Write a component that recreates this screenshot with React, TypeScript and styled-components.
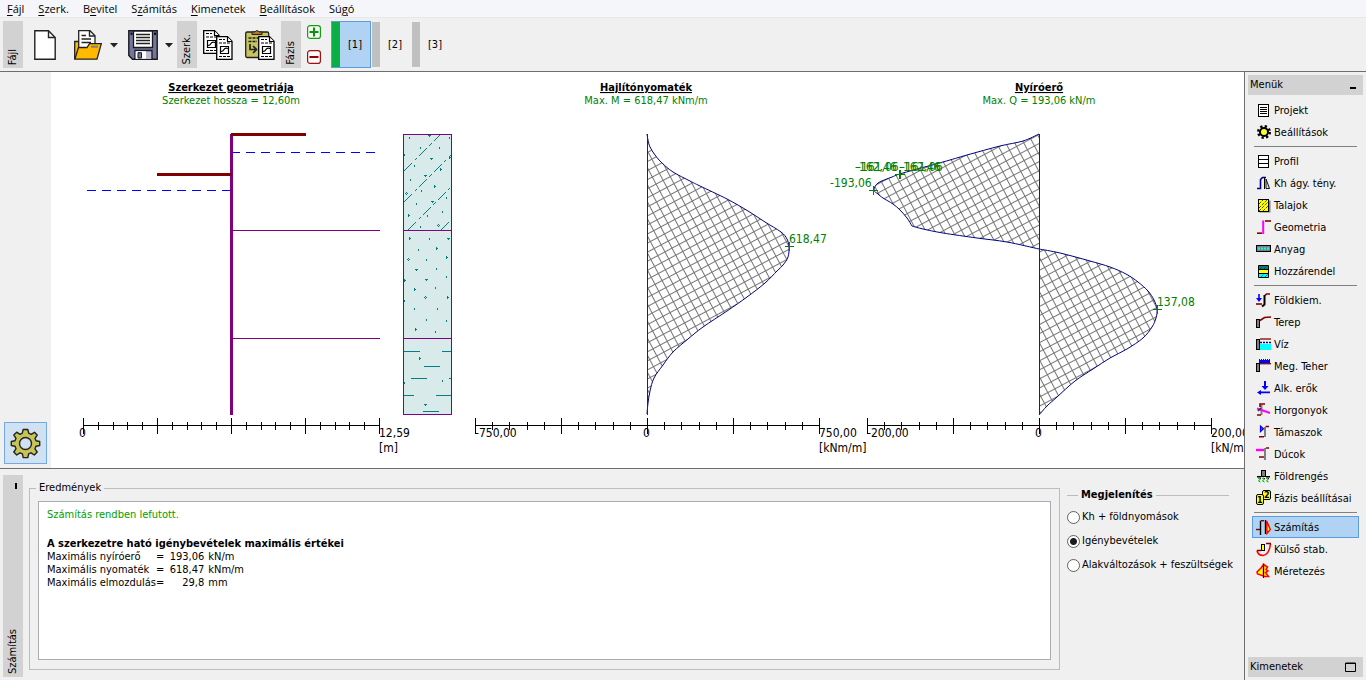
import React, { useState } from 'react';
import styled, { createGlobalStyle, css } from 'styled-components';

const ui = '"DejaVu Sans Condensed", "DejaVu Sans", sans-serif';

const GlobalStyle = createGlobalStyle`
  * { box-sizing: border-box; }
  body { margin: 0; background: #f0f0f0; color: #000; font: 11px/14px ${ui}; }
  button { font: inherit; color: inherit; background: none; border: 0; padding: 0; margin: 0; }
`;

const Page = styled.div`
  display: flex;
  flex-direction: column;
  min-height: 100vh;
  border-bottom: 1px solid #d4d4d4;
`;

const MenuBar = styled.nav`
  display: flex;
  gap: 14px;
  height: 18px;
  padding: 0 7px;
  background: #f5f6f9;
  border-bottom: 1px solid #e8e8e8;
  font-family: 'Open Sans', 'Noto Sans', sans-serif;
  line-height: 17px;
`;

const MenuLink = styled.button`
  display: block;
  white-space: nowrap;
  span { text-decoration: underline; text-underline-offset: 2px; }
`;

const Toolbar = styled.div`
  display: flex;
  height: 54px;
  padding: 3px;
  border-bottom: 1px solid #6e6e6e;
`;

const Tab = styled.div<{ $tall?: boolean }>`
  display: flex;
  flex: none;
  flex-direction: column;
  justify-content: ${(p) => (p.$tall ? 'space-between' : 'flex-end')};
  align-items: center;
  width: 20px;
  padding: ${(p) => (p.$tall ? '8px 0 3px' : '0 0 3px')};
  background: #d2d2d2;
`;

const VerticalText = styled.span`
  writing-mode: vertical-rl;
  transform: rotate(180deg);
  line-height: 16px;
`;

const PinMark = styled.button`
  width: 2px;
  height: 6px;
  margin-left: 6px;
  background: #000;
`;

const ToolButton = styled.button`
  display: flex;
  align-items: center;
  justify-content: center;
  width: 42px;
  height: 48px;
`;

const NewButton = styled(ToolButton)`width: 44px;`;

const DropButton = styled.button`
  display: flex;
  align-items: center;
  justify-content: center;
  width: 10px;
  height: 48px;
  margin-right: 3px;
`;

const PhaseTools = styled.div`
  display: flex;
  flex-direction: column;
  align-items: center;
  gap: 11px;
  width: 26px;
  padding-top: 4px;
  margin-right: 4px;
  button { height: 14px; }
  svg { display: block; }
`;

const PhaseButton = styled.button<{ $on: boolean }>`
  width: 40px;
  height: 47px;
  padding: 1px 0 0 8px;
  border: 1px solid ${(p) => (p.$on ? '#5b9bdf' : 'transparent')};
  background: linear-gradient(90deg, ${(p) => (p.$on ? '#08b043' : '#c0c0c0')} 8px, ${(p) => (p.$on ? '#b1d3f3' : 'transparent')} 8px) padding-box;
`;

const Body = styled.div`
  display: flex;
  flex: 1;
`;

const Main = styled.main`
  display: flex;
  flex: 1;
  flex-direction: column;
  min-width: 0;
`;

const Workspace = styled.section`
  display: flex;
  flex: 1;
  min-height: 397px;
  border-bottom: 1px solid #6e6e6e;
`;

const ViewTools = styled.div`
  display: flex;
  flex: none;
  flex-direction: column;
  justify-content: flex-end;
  width: 51px;
  padding: 4px;
`;

const GearButton = styled.button`
  display: flex;
  align-items: center;
  justify-content: center;
  height: 42px;
  border: 1px solid #72a9e6;
  background: #d0e1f2;
`;

const Plot = styled.svg`
  flex: 1;
  min-width: 0;
  background: #fff;
  font-family: ${ui};
`;

const ResultPanel = styled.section`
  display: flex;
  padding: 6px 15px 3px 3px;
`;

const ResultGroup = styled.fieldset`
  display: flex;
  flex: 1;
  min-width: 0;
  margin: 6px 7px 7px 6px;
  padding: 6px 8px 9px;
  border: 1px solid #bcbcbc;
  legend { height: 14px; padding: 0 3px; margin-left: -2px; }
`;

const ResultBox = styled.div`
  flex: 1;
  min-height: 159px;
  padding: 6px 8px;
  background: #fff;
  border: 1px solid #a9acb2;
`;

const StatusLine = styled.p`
  margin: 0 0 15px;
  color: #00a000;
`;

const ResultHeading = styled.h2`
  margin: 0;
  font-size: 11px;
  line-height: 13px;
`;

const ResultTable = styled.table`
  border-collapse: collapse;
  line-height: 13px;
  white-space: nowrap;
  th { padding: 0; text-align: left; font-weight: normal; min-width: 106px; }
  td { padding: 0; }
  td:nth-of-type(2) { min-width: 40px; text-align: right; }
  td:nth-of-type(3) { padding-left: 4px; }
`;

const DisplayGroup = styled.fieldset`
  flex: none;
  width: 162px;
  min-width: 0;
  margin: 13px 0 0;
  padding: 3px 0 0;
  border: 0;
  border-top: 1px solid #bcbcbc;
  legend { height: 14px; padding: 0 3px; margin-left: 11px; font-weight: bold; }
`;

const RadioRow = styled.label`
  display: flex;
  align-items: center;
  gap: 2px;
  height: 24px;
  white-space: nowrap;
  input {
    appearance: none;
    flex: none;
    width: 13px;
    height: 13px;
    margin: 0;
    border: 1px solid #606060;
    border-radius: 50%;
    background: #fff;
  }
  input:checked { background: radial-gradient(circle, #1c1c1c 3px, #fff 4px); }
`;

const Sidebar = styled.aside`
  display: flex;
  flex: none;
  flex-direction: column;
  width: 122px;
  padding: 3px;
  border-left: 1px solid #6e6e6e;
`;

const SideHead = styled.button`
  display: flex;
  justify-content: space-between;
  align-items: center;
  height: 20px;
  padding: 0 7px 0 2px;
  background: #d2d2d2;
`;

const SideList = styled.ul`
  flex: 1;
  margin: 4px 4px 0;
  padding: 0;
  list-style: none;
`;

const SideItem = styled.button<{ $on: boolean }>`
  display: flex;
  align-items: center;
  gap: 2px;
  width: 107px;
  height: 22px;
  padding-left: 3px;
  border: 1px solid transparent;
  white-space: nowrap;
  svg { flex: none; }
  span { padding-top: 2px; }
  ${(p) => p.$on && css`background: #b1d3f3; border-color: #5b9bdf;`}
`;

const Divider = styled.li`
  height: 7px;
  padding: 3px 2px;
  &::before { content: ''; display: block; height: 1px; background: #808080; }
`;

/* Toolbar drawings */

const NewIcon = () => (
  <svg width="22" height="30" viewBox="0 0 22 30">
    <path d="M1 .8H14.500L21.200 7.500V29.200H.8V.8Z" fill="#fff" stroke="#222" strokeWidth="1.400" />
    <path d="M14.500 1V7.500H21" fill="none" stroke="#222" strokeWidth="1.400" />
  </svg>
);

const OpenIcon = () => (
  <svg width="28" height="30" viewBox="0 0 28 30">
    <path d="M.7 29V11.500H9L11 14H22V17" fill="#ffb900" stroke="#222" strokeWidth="1.300" />
    <path d="M4.700 18V.7H16L21 5.700V18Z" fill="#fff" stroke="#222" strokeWidth="1.300" />
    <path d="M15.500 1V6H21M7.500 5.500H12M7.500 9H17M7.500 12.500H17" fill="none" stroke="#222" strokeWidth="1.400" />
    <path d="M.8 29.200L4.500 17.500H13L15.500 13.700H27.300L23 29.200Z" fill="#ffb900" stroke="#222" strokeWidth="1.300" />
    <path d="M17 16.700H24" stroke="#808080" strokeWidth="2" />
  </svg>
);

const SaveIcon = () => (
  <svg width="30" height="30" viewBox="0 0 30 30">
    <path d="M.8.800H29.200V29.200H4.500L.8 25.500Z" fill="#757799" stroke="#181820" strokeWidth="1.400" />
    <path d="M5.500 1H24.500V17.500H5.500Z" fill="#fff" stroke="#181820" strokeWidth="1.300" />
    <path d="M8 4.500H22M8 7.500H22M8 10.500H22M8 13.500H22" stroke="#222" strokeWidth="1.400" />
    <path d="M2.500 2.500H4.500V5H2.500ZM26 2.500H28V5H26Z" fill="#111" />
    <path d="M7 29V20.500H24V29" fill="#b9bacb" stroke="#181820" strokeWidth="1.300" />
    <path d="M7.700 21.200H18V28.500H7.700Z" fill="#fff" />
    <path d="M10 22.700H13.500V28H10Z" fill="#757799" stroke="#181820" />
  </svg>
);

const SheetShape = () => (
  <g>
    <path d="M.7.700H11.500L16 5.200V23.300H.7Z" fill="#fff" stroke="#000" strokeWidth="1.300" />
    <path d="M11.500 1V5.500H16" fill="#fff" stroke="#000" strokeWidth="1.200" />
    <path d="M3 3.500H9M3 7H14M3 20.500H14" stroke="#000" strokeWidth="1.200" strokeDasharray="3 1" />
    <path d="M4.500 10.500H12.500V17.500H4.500ZM5 15.500Q7 15.500 8 13.500T12 12.500" fill="none" stroke="#000" strokeWidth="1.200" />
  </g>
);

const CopyIcon = () => (
  <svg width="30" height="30" viewBox="0 0 30 30">
    <SheetShape />
    <g transform="translate(13 6)"><SheetShape /></g>
  </svg>
);

const PasteIcon = () => (
  <svg width="30" height="30" viewBox="0 0 30 30">
    <rect x=".7" y="2" width="23" height="25.500" rx="1.500" fill="#c5c45e" stroke="#222" strokeWidth="1.300" />
    <path d="M7 4.500V2H9.500Q12 -1 14.500 2H17V4.500Z" fill="#b8752f" stroke="#222" />
    <path d="M3.500 8H20M3.500 11.500H12" stroke="#222" strokeWidth="1.300" strokeDasharray="3 1" />
    <path d="M5 14V19.500H11M8 16L11.500 19.500L8 23" fill="none" stroke="#222" strokeWidth="1.700" />
    <g transform="translate(13 6)"><SheetShape /></g>
  </svg>
);

const Caret = () => (
  <svg width="8" height="5" viewBox="0 0 8 5"><path d="M0 0H8L4 4.500Z" fill="#222" /></svg>
);

const SignIcon = ({ plus }: { plus?: boolean }) => (
  <svg width="14" height="14" viewBox="0 0 14 14">
    <rect x=".6" y=".6" width="12.800" height="12.800" rx="2.500" fill="#fafafa" stroke={plus ? '#159c15' : '#9c1010'} strokeWidth="1.200" />
    <path d={plus ? 'M2.500 7H11.500M7 2.500V11.500' : 'M2.500 7H11.500'} stroke={plus ? '#009a00' : '#980000'} strokeWidth="2" />
  </svg>
);

const GearIcon = () => (
  <svg width="31" height="31" viewBox="0 0 31 31">
    <g stroke="#222" strokeWidth="1.400" strokeLinejoin="round" fill="#c7c453">
      <path d="M13.200 1.500H17.800L18.700 5.200L21.200 6.300L24.500 4.300L27.200 7L25 10.300L26 12.800L29.700 13.500V17.500L26 18.300L25 20.800L27.200 24L24.300 27L21 24.800L18.600 25.800L17.800 29.600H13.200L12.400 25.800L10 24.800L6.700 27L3.800 24L6 20.800L5 18.300L1.300 17.500V13.500L5 12.800L6 10.300L3.800 7L6.700 4.200L10 6.300L12.300 5.200Z" />
      <circle cx="15.500" cy="15.500" r="6" fill="#d0e1f2" />
    </g>
  </svg>
);

/* Sidebar drawings, each on a 16 by 16 grid */

const M = '#800000';
const P = '#ff00ff';
const B = '#0000ff';

const glyphs: Record<string, React.ReactNode> = {
  project: (
    <g stroke="#000"><rect x="2.500" y="2.500" width="10" height="12" fill="#fff" /><path d="M4 5.500H11M4 7.500H11M4 9.500H11M4 11.500H11" /></g>
  ),
  settings: (
    <g>
      <circle cx="8" cy="8" r="5.800" fill="none" stroke="#000" strokeWidth="2.400" strokeDasharray="2.280 2.280" />
      <circle cx="8" cy="8" r="4" fill="#ffff30" stroke="#000" strokeWidth="2" />
    </g>
  ),
  profile: (
    <g stroke="#000"><rect x="2.500" y="2.500" width="10" height="12" fill="#fff" /><path d="M2 6.500H13M2 10.500H13" /></g>
  ),
  subgrade: (
    <g fill="none">
      <path d="M1 13.500H4.500V4.500L6.500 2.500H10" stroke="#000080" strokeWidth="1.600" />
      <path d="M8.500 2V14" stroke="#000" />
      <path d="M10 4V13.500H13.500Z" fill="#ffff00" stroke="#000080" />
    </g>
  ),
  soils: (
    <g>
      <rect x="3.500" y="3.500" width="11" height="12" fill="#808080" />
      <rect x="2.500" y="2.500" width="10" height="12" fill="#ffff00" stroke="#000" />
      <path d="M3 7L7 3M3 11L11 3M3 14L12 5M7 14L12 9" stroke="#555500" strokeDasharray="3 1" />
    </g>
  ),
  geometry: (
    <g fill="none" strokeWidth="1.600">
      <path d="M1 14.200H6" stroke={M} /><path d="M7.200 15V1.500" stroke={P} strokeWidth="2" /><path d="M9 2H15" stroke={M} />
    </g>
  ),
  material: (
    <g><rect x=".5" y="4.500" width="14" height="6" fill="#808080" stroke="#000" /><path d="M2 7.500H14" stroke="#00ffff" strokeWidth="2" strokeDasharray="2 1" /></g>
  ),
  assign: (
    <g>
      <rect x="2.500" y="2.500" width="10" height="12" fill="#ffff00" />
      <path d="M3 3H12V6H3Z" fill="#008080" /><path d="M3 11H12V14H3Z" fill="#00ffff" />
      <path d="M5 14L8 11M9 14L12 11M4 6L7 3M8 6L11 3" stroke="#003030" strokeDasharray="1 1" />
      <path d="M2.500 2.500H12.500V14.500H2.500ZM2.500 6.500H12.500M2.500 10.500H12.500" fill="none" stroke="#000" />
    </g>
  ),
  excavation: (
    <g fill="none">
      <path d="M3 2V8" stroke={B} strokeWidth="1.600" /><path d="M0 6H6L3 10Z" fill={B} />
      <path d="M0 12H6" stroke={M} strokeWidth="1.600" />
      <path d="M6 14.500L8.500 12.500V3" stroke="#000" strokeWidth="2" /><path d="M9 3.500L10.500 2H14" stroke={M} strokeWidth="1.600" />
    </g>
  ),
  terrain: (
    <g><rect x=".5" y="5.500" width="3" height="8" fill="#808080" stroke="#000" /><path d="M4 6.500L8.500 3.500L15 3" fill="none" stroke={M} strokeWidth="1.600" /></g>
  ),
  water: (
    <g>
      <rect x="4" y="8" width="11" height="6" fill="#00ffff" /><path d="M4 3H15" stroke={M} strokeWidth="1.300" />
      <path d="M4 6.500H15" stroke="#0000a0" strokeWidth="1.500" strokeDasharray="2 1" /><rect x=".5" y="3.500" width="3" height="10" fill="#808080" stroke="#000" />
    </g>
  ),
  surcharge: (
    <g>
      <path d="M3 5V1H4V2H5V1H6V2H7V1H8V2H9V1H10V2H11V1H12V2H13V1H14V5Z" fill={B} />
      <path d="M3 5.700H15" stroke={M} strokeWidth="1.300" /><rect x=".5" y="5.500" width="3" height="8" fill="#808080" stroke="#000" />
    </g>
  ),
  forces: (
    <g fill={B}><path d="M8 1H10V6H12.500L9 10L5.500 6H8Z" /><path d="M14 11.500V13.300H5V15L1 12.400L5 10V11.500Z" /></g>
  ),
  anchors: (
    <g fill="none" strokeWidth="1.600">
      <path d="M5.500 3V13" stroke="#808080" strokeWidth="2" /><path d="M4 5V2H9M1 13H5" stroke={M} />
      <path d="M1 6.500L14 11" stroke={P} strokeWidth="2" /><path d="M2 9L5 6" stroke="#333" />
    </g>
  ),
  props: (
    <g fill="none" strokeWidth="1.600">
      <path d="M9 3V13" stroke="#808080" strokeWidth="2" /><path d="M9.500 2.500H13M3 12.800H8" stroke={M} />
      <path d="M4.500 2V7.500L7.500 4.700Z" fill={P} stroke={B} strokeWidth="1.200" />
    </g>
  ),
  struts: (
    <g fill="none" strokeWidth="1.600">
      <path d="M9 2V14" stroke="#808080" strokeWidth="2" /><path d="M10 2H13M3 11H8" stroke={M} /><path d="M0 4H8" stroke={P} strokeWidth="2.400" />
    </g>
  ),
  quake: (
    <g fill="none">
      <rect x="5.500" y="2.500" width="4" height="6" fill="#808080" stroke="#000" /><path d="M1 8.700H5M10 8.700H14" stroke="#000" strokeWidth="1.500" />
      <path d="M2 10L4 11.500L2.500 13L4.500 14M6 10L8 11.500L6.500 13L8.500 14M10 10L12 11.500L10.500 13L12.500 14" stroke="#00b000" />
      <path d="M3.500 10L5 11M7.500 10L9 11M11.500 10L13 11" stroke="#000" />
    </g>
  ),
  stage: (
    <g fontFamily="DejaVu Sans" fontWeight="bold" fontSize="8">
      <rect x="6.500" y=".5" width="8" height="9" rx="1.500" fill="#ffff20" stroke="#000" />
      <text x="8" y="8">2</text>
      <rect x=".5" y="4.500" width="7" height="10" rx="1.500" fill="#ffff20" stroke="#000" />
      <text x="1" y="13">1</text>
    </g>
  ),
  analysis: (
    <g fill="none" strokeWidth="1.400">
      <path d="M0 10.500H4" stroke={M} /><path d="M4.500 16V1.700M9.500 1V15" stroke="#000" /><path d="M5 1.700H8" stroke={M} />
      <path d="M10.700 2L14.300 10.500L11 14.500Z" fill="#ffff00" stroke="#ff0000" />
    </g>
  ),
  stability: (
    <g fill="none">
      <path d="M1 9.500Q2 14.500 7 14.500Q13 14 14.500 3" stroke="#ff0000" strokeWidth="1.600" />
      <path d="M1 9.500H5M10 2.500H15" stroke={M} strokeWidth="1.600" /><rect x="5.500" y="3.500" width="3" height="6" fill="#ffff00" stroke="#000" />
    </g>
  ),
  design: (
    <g>
      <path d="M7.500 1.500L5 5L1 9L1.500 11L7.500 13ZM7.500 1.500L11.500 4L10 6.500L12 8L9.500 9.500L12.500 13.500H7.500Z" fill="#ffff00" stroke="#ff0000" strokeWidth="1.500" />
      <path d="M7.500 1V15" stroke="#000" />
    </g>
  ),
};

const sideGroups: [string, string][][] = [
  [['project', 'Projekt'], ['settings', 'Beállítások']],
  [['profile', 'Profil'], ['subgrade', 'Kh ágy. tény.'], ['soils', 'Talajok'], ['geometry', 'Geometria'], ['material', 'Anyag'], ['assign', 'Hozzárendel']],
  [['excavation', 'Földkiem.'], ['terrain', 'Terep'], ['water', 'Víz'], ['surcharge', 'Meg. Teher'], ['forces', 'Alk. erők'], ['anchors', 'Horgonyok'], ['props', 'Támaszok'], ['struts', 'Dúcok'], ['quake', 'Földrengés'], ['stage', 'Fázis beállításai']],
  [['analysis', 'Számítás'], ['stability', 'Külső stab.'], ['design', 'Méretezés']],
];

/* Diagram data */

type Point = [number, number];

const grains: Point[] = [
  [409, 137], [439, 147], [420, 147], [449, 137], [414, 165], [410, 179], [421, 190], [446, 197], [416, 203], [442, 211], [427, 215], [420, 226], [404, 154],
  [429, 238], [418, 249], [426, 259], [436, 268], [446, 276], [435, 287], [404, 300], [414, 308], [437, 308], [426, 319], [446, 320], [435, 331], [442, 380], [404, 382],
];
const wedges: Point[] = [[429, 135], [431, 158], [425, 175], [432, 201], [448, 238], [416, 269], [426, 279], [425, 404]];
const chips: Point[] = [[441, 169], [435, 186], [409, 215], [450, 157], [410, 238], [437, 248], [447, 257], [405, 280], [415, 289], [448, 297], [416, 329], [420, 358]];
const pebbles: Point[] = [[406, 193], [438, 225], [408, 259], [425, 297]];

const soilMarks = [
  ...grains.map(([x, y]) => `M${x} ${y}h1v2h-1z`),
  ...wedges.map(([x, y]) => `M${x - 1} ${y}h3v1h-1v1h-1v-1h-1z`),
  ...chips.map(([x, y]) => `M${x - 1} ${y - 1}h1v1h1v1h-1v1h-1z`),
  ...pebbles.map(([x, y]) => `M${x} ${y - 1}h1v1h-1zM${x - 1} ${y}h1v1h-1zM${x + 1} ${y}h1v1h-1zM${x} ${y + 1}h1v1h-1z`),
].join('');

/* Smooth line through all points (Catmull-Rom turned into Bézier segments) */
const smooth = (pts: Point[]) =>
  pts.slice(1).reduce((d, p, i) => {
    const a = pts[Math.max(i - 1, 0)];
    const b = pts[i];
    const c = pts[Math.min(i + 2, pts.length - 1)];
    const x1 = b[0] + (p[0] - a[0]) / 6;
    const y1 = b[1] + (p[1] - a[1]) / 6;
    const x2 = p[0] - (c[0] - b[0]) / 6;
    const y2 = p[1] - (c[1] - b[1]) / 6;
    return `${d}C${x1} ${y1} ${x2} ${y2} ${p[0]} ${p[1]}`;
  }, `M${pts[0][0]} ${pts[0][1]}`);

const momentCurve: Point[] = [
  [647, 134], [648, 140], [650, 147], [655, 155], [662, 163], [673, 172], [690, 181], [700, 186], [727, 199], [748, 211], [765, 222], [781, 232],
  [787, 239], [789, 247], [788, 257], [783, 265], [777, 271], [765, 283], [747, 297], [727, 311], [703, 327], [688, 339], [673, 352], [663, 365], [654, 378], [650, 391], [648, 403], [647, 414],
];
const shearToCorner: Point[] = [
  [1039, 134], [1023, 141], [1000, 146], [967, 155], [943, 162], [903, 173], [892, 177], [878, 183], [874, 190], [878, 194], [883, 198], [893, 204], [900, 210], [907, 218], [912, 226],
];
const shearToZero: Point[] = [[912, 226], [923, 229], [943, 233], [977, 238], [1007, 242], [1039, 249]];
const shearBelow: Point[] = [
  [1039, 249], [1060, 253], [1090, 261], [1110, 267], [1126, 274], [1138, 282], [1148, 291], [1154, 300], [1157, 309], [1156, 318], [1152, 327], [1143, 338],
  [1127, 349], [1110, 358], [1093, 369], [1075, 381], [1057, 397], [1047, 406], [1039, 415],
];

const Axis = ({ from, step, labels }: { from: number; step: number; labels: [string, string, string] }) => {
  const ticks = Array.from({ length: 21 }, (_, i) => {
    const x = Math.round(from + i * step) + 0.5;
    return i % 5 === 0 ? `M${x} 418V434` : `M${x} 422V430`;
  });
  const [low, high, unit] = labels;
  const end = from + step * 20;
  return (
    <g>
      <path d={`M${from} 425.500H${end}${ticks.join('')}`} stroke="#000" shapeRendering="crispEdges" />
      <g fontSize="12">
        <text x={low === '0' ? from - 4 : from} y="437">{low}</text>
        {low !== '0' && <text x={from + step * 10 - 4} y="437">0</text>}
        <text x={end} y="437">{high}</text>
        <text x={end} y="452">{unit}</text>
      </g>
    </g>
  );
};

const PlotTitle = ({ x, title, note }: { x: number; title: string; note: string }) => (
  <g fontSize="11" textAnchor="middle">
    <text x={x} y="91" fontWeight="bold" textDecoration="underline">{title}</text>
    <text x={x} y="104" fill="#008000">{note}</text>
  </g>
);

const Peak = ({ x, y }: { x: number; y: number }) => (
  <path d={`M${x - 4} ${y}.500h9M${x}.500 ${y - 4}v9`} stroke="#008000" shapeRendering="crispEdges" />
);

const Diagrams = () => (
  <Plot viewBox="51 72 1193 396" preserveAspectRatio="xMinYMin meet" role="img" aria-label="Igénybevételek">
    <defs>
      <pattern id="hatch" width="8" height="8" patternUnits="userSpaceOnUse" patternTransform="translate(647 134) rotate(-28)">
        <path d="M0 .5H8M.5 0V8" stroke="#757575" />
      </pattern>
      <clipPath id="upperSoil"><rect x="404" y="135" width="47" height="95" /></clipPath>
    </defs>

    <PlotTitle x={231} title="Szerkezet geometriája" note="Szerkezet hossza = 12,60m" />
    <PlotTitle x={646} title="Hajlítónyomaték" note="Max. M = 618,47 kNm/m" />
    <PlotTitle x={1039} title="Nyíróerő" note="Max. Q = 193,06 kN/m" />

    <g shapeRendering="crispEdges">
      <path d="M231 152.500H377M87 190.500H231" stroke="#0000ff" strokeDasharray="9 6" />
      <path d="M233 230.500H380M233 338.500H380" stroke="#800080" />
      <rect x="230" y="134" width="3" height="281" fill="#800080" />
      <path d="M231 133H306V136H231ZM157 173H232V176H157Z" fill="#800000" />
      <rect x="403.500" y="134.500" width="48" height="280" fill="#d8ebea" />
      <path d="M404 351.500h16M442 351.500h9M424 366.500h16M411 378.500h16M449 378.500h2M404 395.500h10M436 395.500h15M423 411.500h16" stroke="#008080" />
      <path d="M404 171L440 135M404 202L451 155M408 230L451 187M441 230L451 220" stroke="#008080" strokeDasharray="12 3 3 3" clipPath="url(#upperSoil)" />
      <path d={soilMarks} fill="#008080" />
      <path d="M403.500 134.500H451.500V414.500H403.500ZM403.500 230.500H451.500M403.500 338.500H451.500" fill="none" stroke="#800080" />
    </g>

    <g fill="url(#hatch)" stroke="#000080">
      <path d={smooth(momentCurve)} />
      <path d={`${smooth(shearToCorner)}${smooth(shearToZero).replace('M', 'L')}`} />
      <path d={smooth(shearBelow)} />
    </g>
    <path d="M647.500 134V415M1039.500 134V415" stroke="#600060" shapeRendering="crispEdges" />

    <Axis from={83} step={14.8} labels={['0', '12,59', '[m]']} />
    <Axis from={475} step={17.2} labels={['-750,00', '750,00', '[kNm/m]']} />
    <Axis from={867} step={17.2} labels={['-200,00', '200,00', '[kN/m]']} />

    <Peak x={789} y={246} />
    <Peak x={873} y={190} />
    <Peak x={899} y={174} />
    <Peak x={900} y={174} />
    <Peak x={1157} y={309} />
    <g fill="#008000" fontSize="12">
      <text x="789" y="243">618,47</text>
      <text x="830" y="187">-193,06</text>
      <text x="855" y="171">-162,46</text>
      <text x="857" y="171">-161,06</text>
      <text x="899" y="171">-162,46</text>
      <text x="901" y="171">-161,06</text>
      <text x="1157" y="306">137,08</text>
    </g>
  </Plot>
);

const menus: [string, string, string][] = [
  ['', 'F', 'ájl'], ['', 'S', 'zerk.'], ['B', 'e', 'vitel'], ['S', 'z', 'ámítás'], ['', 'K', 'imenetek'], ['', 'B', 'eállítások'], ['Sú', 'g', 'ó'],
];

const results: [string, string, string][] = [
  ['Maximális nyíróerő', '193,06', 'kN/m'], ['Maximális nyomaték', '618,47', 'kNm/m'], ['Maximális elmozdulás', '29,8', 'mm'],
];

const displayModes = ['Kh + földnyomások', 'Igénybevételek', 'Alakváltozások + feszültségek'];

export default function App() {
  const [phase, setPhase] = useState(1);
  const [section, setSection] = useState('analysis');
  const [mode, setMode] = useState(displayModes[1]);

  return (
    <Page>
      <GlobalStyle />
      <MenuBar>
        {menus.map(([before, key, after]) => (
          <MenuLink key={before + key}>{before}<span>{key}</span>{after}</MenuLink>
        ))}
      </MenuBar>
      <Toolbar>
        <Tab><VerticalText>Fájl</VerticalText></Tab>
        <NewButton aria-label="Új"><NewIcon /></NewButton>
        <ToolButton aria-label="Megnyitás"><OpenIcon /></ToolButton>
        <DropButton aria-label="Legutóbbi fájlok"><Caret /></DropButton>
        <ToolButton aria-label="Mentés"><SaveIcon /></ToolButton>
        <DropButton aria-label="Mentés másként"><Caret /></DropButton>
        <Tab><VerticalText>Szerk.</VerticalText></Tab>
        <ToolButton aria-label="Másolás"><CopyIcon /></ToolButton>
        <ToolButton aria-label="Beillesztés"><PasteIcon /></ToolButton>
        <Tab><VerticalText>Fázis</VerticalText></Tab>
        <PhaseTools>
          <button aria-label="Fázis hozzáadása"><SignIcon plus /></button>
          <button aria-label="Fázis törlése"><SignIcon /></button>
        </PhaseTools>
        {[1, 2, 3].map((n) => (
          <PhaseButton key={n} $on={phase === n} onClick={() => setPhase(n)}>[{n}]</PhaseButton>
        ))}
      </Toolbar>
      <Body>
        <Main>
          <Workspace>
            <ViewTools>
              <GearButton aria-label="Rajz beállításai"><GearIcon /></GearButton>
            </ViewTools>
            <Diagrams />
          </Workspace>
          <ResultPanel>
            <Tab $tall>
              <PinMark aria-label="Panel elrejtése" />
              <VerticalText>Számítás</VerticalText>
            </Tab>
            <ResultGroup>
              <legend>Eredmények</legend>
              <ResultBox>
                <StatusLine>Számítás rendben lefutott.</StatusLine>
                <ResultHeading id="maxima">A szerkezetre ható igénybevételek maximális értékei</ResultHeading>
                <ResultTable aria-labelledby="maxima">
                  <tbody>
                    {results.map(([name, value, unit]) => (
                      <tr key={name}><th scope="row">{name}</th><td>=</td><td>{value}</td><td>{unit}</td></tr>
                    ))}
                  </tbody>
                </ResultTable>
              </ResultBox>
            </ResultGroup>
            <DisplayGroup>
              <legend>Megjelenítés</legend>
              {displayModes.map((name) => (
                <RadioRow key={name}>
                  <input type="radio" name="mode" checked={mode === name} onChange={() => setMode(name)} />
                  {name}
                </RadioRow>
              ))}
            </DisplayGroup>
          </ResultPanel>
        </Main>
        <Sidebar>
          <SideHead>
            Menük
            <svg width="6" height="10" viewBox="0 0 6 10"><path d="M0 7H6V9H0Z" /></svg>
          </SideHead>
          <SideList>
            {sideGroups.map((group, i) => (
              <React.Fragment key={i}>
                {i > 0 && <Divider role="separator" />}
                {group.map(([id, name]) => (
                  <li key={id}>
                    <SideItem $on={section === id} onClick={() => setSection(id)}>
                      <svg width="16" height="16" viewBox="0 0 16 16">{glyphs[id]}</svg>
                      <span>{name}</span>
                    </SideItem>
                  </li>
                ))}
              </React.Fragment>
            ))}
          </SideList>
          <SideHead>
            Kimenetek
            <svg width="11" height="10" viewBox="0 0 11 10"><path d="M.5 1H10.500V9.500H.5ZM0 1.500H11" fill="none" stroke="#000" /></svg>
          </SideHead>
        </Sidebar>
      </Body>
    </Page>
  );
}
